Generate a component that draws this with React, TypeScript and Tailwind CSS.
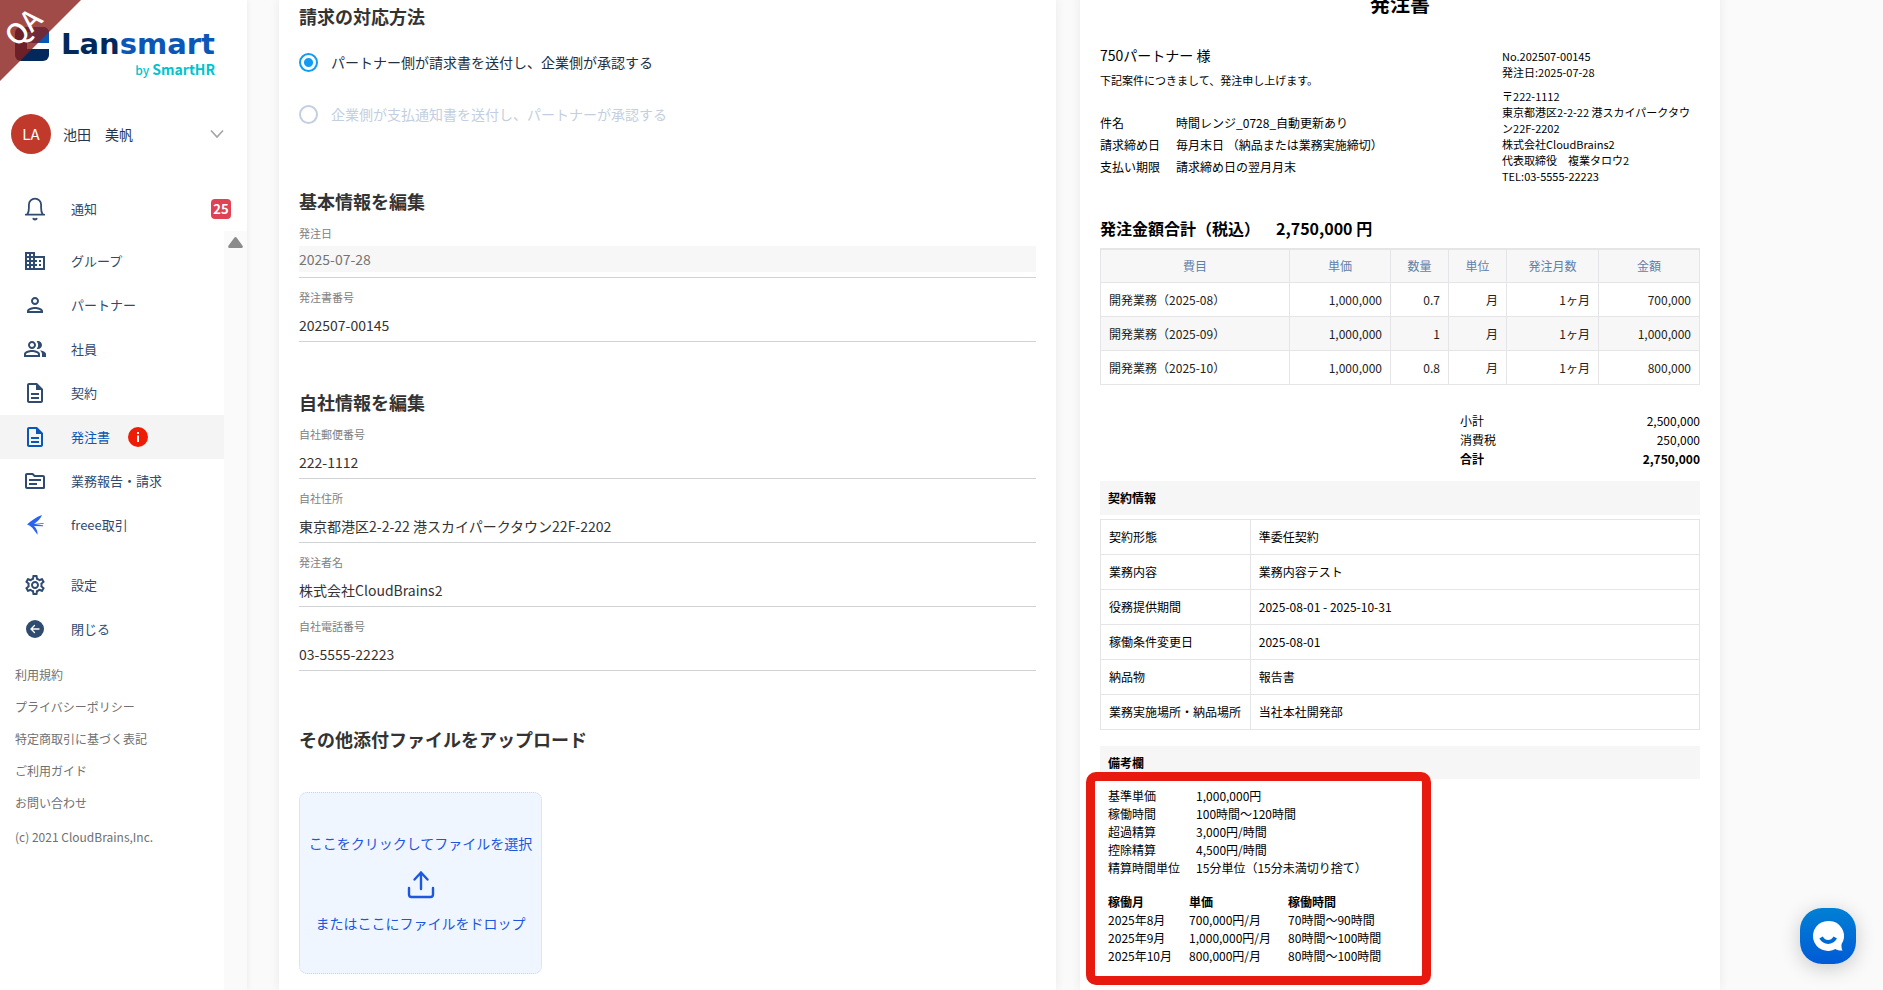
import React, { useState } from 'react';
import {
  MdDomain, MdOutlineDescription, MdOutlinePeopleAlt, MdOutlinePerson,
  MdOutlineSettings, MdOutlineTopic,
} from 'react-icons/md';

// --- Data ---
const FOOTER_LINKS = ['利用規約', 'プライバシーポリシー', '特定商取引に基づく表記', 'ご利用ガイド', 'お問い合わせ'];

const COMPANY_FIELDS = [
  { id: 'zip', label: '自社郵便番号', value: '222-1112' },
  { id: 'address', label: '自社住所', value: '東京都港区2-2-22 港スカイパークタウン22F-2202' },
  { id: 'orderer', label: '発注者名', value: '株式会社CloudBrains2' },
  { id: 'tel', label: '自社電話番号', value: '03-5555-22223' },
];

const ITEMS = [
  ['開発業務（2025-08）', '1,000,000', '0.7', '月', '1ヶ月', '700,000'],
  ['開発業務（2025-09）', '1,000,000', '1', '月', '1ヶ月', '1,000,000'],
  ['開発業務（2025-10）', '1,000,000', '0.8', '月', '1ヶ月', '800,000'],
];

const CONTRACT = [
  ['契約形態', '準委任契約'],
  ['業務内容', '業務内容テスト'],
  ['役務提供期間', '2025-08-01 - 2025-10-31'],
  ['稼働条件変更日', '2025-08-01'],
  ['納品物', '報告書'],
  ['業務実施場所・納品場所', '当社本社開発部'],
];

const RATES = [
  ['基準単価', '1,000,000円'],
  ['稼働時間', '100時間〜120時間'],
  ['超過精算', '3,000円/時間'],
  ['控除精算', '4,500円/時間'],
  ['精算時間単位', '15分単位（15分未満切り捨て）'],
];

const MONTHS = [
  ['2025年8月', '700,000円/月', '70時間〜90時間'],
  ['2025年9月', '1,000,000円/月', '80時間〜100時間'],
  ['2025年10月', '800,000円/月', '80時間〜100時間'],
];

// --- Icons ---
const BellIcon = () => (
  <svg viewBox="0 0 24 24" className="h-6 w-6" fill="none" stroke="currentColor" strokeWidth="1.8" strokeLinecap="round" strokeLinejoin="round">
    <path d="M2.800 17.700h18.400M4.400 17.300c1.200-1.700 1.500-3.300 1.500-6.300V7.800a6.100 6.100 0 0 1 12.200 0V11c0 3 .3 4.600 1.500 6.300" />
    <path d="M10.500 21.700c.8.800 2.200.800 3 0" strokeWidth="2" />
  </svg>
);

const SwallowIcon = () => (
  <svg viewBox="0 0 24 24" className="h-6 w-6" fill="#2864f0">
    <path d="M19 2C13 4 8 8 4 11.500c4 1 6.500 4.500 10.500 10.300.4-3-.8-6.300-3.500-8.800l9 .300v-1l-7.500-.500 8.200-1-.1-.700-9.600.900C14.500 8.500 17.500 6 19 2z" />
  </svg>
);

const BackIcon = () => (
  <svg viewBox="0 0 24 24" className="h-6 w-6">
    <circle cx="12" cy="12" r="9" fill="currentColor" />
    <path d="M16 12H8.500M11.500 8.500L8 12l3.500 3.500" fill="none" stroke="#fff" strokeWidth="1.300" strokeLinecap="round" strokeLinejoin="round" />
  </svg>
);

const UploadIcon = () => (
  <svg viewBox="0 0 32 32" className="h-8 w-8" fill="none" stroke="currentColor" strokeWidth="2.400" strokeLinecap="round" strokeLinejoin="round">
    <path d="M16 22V5.500M9.500 12.500l6.500-7 6.500 7M4 21v6.500A2.500 2.500 0 0 0 6.500 30h19a2.500 2.500 0 0 0 2.500-2.500V21" />
  </svg>
);

const ChatIcon = () => (
  <svg viewBox="0 0 32 32" className="h-8 w-8">
    <path d="M16 1a15 15 0 1 0 7.500 28c2 1.300 4.500 1.700 7 1.500-.9-1.800-1.300-4-.9-6.500A15 15 0 0 0 16 1z" fill="#fff" />
    <path d="M9 17.500c3.800 6 10.500 6 14.300 0" fill="none" stroke="#006ad4" strokeWidth="4" />
  </svg>
);

const NAV = [
  { label: 'グループ', icon: <MdDomain size={24} /> },
  { label: 'パートナー', icon: <MdOutlinePerson size={24} /> },
  { label: '社員', icon: <MdOutlinePeopleAlt size={24} /> },
  { label: '契約', icon: <MdOutlineDescription size={24} /> },
  { label: '発注書', icon: <MdOutlineDescription size={24} />, active: true },
  { label: '業務報告・請求', icon: <MdOutlineTopic size={24} /> },
  { label: 'freee取引', icon: <SwallowIcon /> },
];

function NavItem({ label, icon, active, children }: { label: string; icon: React.ReactNode; active?: boolean; children?: React.ReactNode }) {
  return (
    <a
      href="#"
      aria-current={active ? 'page' : undefined}
      className={`flex h-11 items-center pl-[23px] text-[13px] ${active ? 'bg-[#f4f4f4] text-[#0b57b7]' : 'text-[#2f4b70]'}`}
    >
      {icon}
      <span className="ml-6">{label}</span>
      {children}
    </a>
  );
}

function Logo() {
  return (
    <div className="flex h-[88px] pt-[27px] pl-[15px]">
      <svg viewBox="0 0 34 34" className="h-[34px] w-[34px] shrink-0">
        <rect width="34" height="34" rx="6" fill="#03295c" />
        <path d="M17 0h11a6 6 0 0 1 6 6v10H17z" fill="#0b57b7" />
        <path d="M12 5h5v11h-5z" fill="#5a7fb8" />
        <path d="M12 16h22v6H12z" fill="#fff" />
      </svg>
      <div className="ml-3 w-[154px]">
        <p className="font-['DejaVu_Sans',sans-serif] text-[29px] leading-[34px] font-bold text-[#03295c]">
          Lan<span className="text-[#0b57b7]">smart</span>
        </p>
        <p className="text-right text-sm leading-4 font-bold text-[#00c4cc]">
          <span className="text-xs font-medium">by</span> SmartHR
        </p>
      </div>
    </div>
  );
}

function Sidebar() {
  return (
    <aside className="relative z-10 flex w-[247px] shrink-0 flex-col bg-white shadow-[0_0_6px_rgba(0,0,0,0.08)]">
      <Logo />
      {/* environment ribbon */}
      <div className="absolute top-0 left-0">
        <div className="h-[81px] w-[81px] bg-[#881e1a]/80 [clip-path:polygon(0_0,100%_0,0_100%)]" />
        <span className="absolute top-2 left-0 w-11 -rotate-45 text-center text-[28px] leading-9 font-medium text-white">QA</span>
      </div>

      <button className="mt-[22px] flex h-12 items-center pl-[11px] text-left">
        <span className="flex h-10 w-10 items-center justify-center rounded-full bg-[#c0392b] text-[15px] text-white">LA</span>
        <span className="ml-3 flex-1 text-sm text-[#24364f]">池田　美帆</span>
        <svg viewBox="0 0 16 16" className="mr-[22px] h-4 w-4" fill="none" stroke="#a3a3a8" strokeWidth="1.600">
          <path d="M2 4.500l6 6.500 6-6.500" />
        </svg>
      </button>

      <div className="mt-[29px] flex h-11 items-center pl-[23px] text-[#2f4b70]">
        <BellIcon />
        <a href="#" className="ml-6 flex-1 text-[13px]">通知</a>
        <span className="mr-4 flex h-5 w-5 items-center justify-center rounded bg-[#e04255] text-[13px] font-bold text-white">25</span>
      </div>

      <div className="flex flex-1">
        <div className="flex-1 pt-2">
          <nav>
            {NAV.map((n) => (
              <NavItem key={n.label} label={n.label} icon={n.icon} active={n.active}>
                {n.active && (
                  <svg viewBox="0 0 20 20" className="ml-[18px] h-5 w-5">
                    <circle cx="10" cy="10" r="10" fill="#ee1c05" />
                    <path d="M9 5h2v2H9zM9 8.500h2V15H9z" fill="#fff" />
                  </svg>
                )}
              </NavItem>
            ))}
            <div className="mt-4">
              <NavItem label="設定" icon={<MdOutlineSettings size={24} />} />
              <NavItem label="閉じる" icon={<BackIcon />} />
            </div>
          </nav>
          <ul className="mt-2 pl-[15px] text-xs text-[#707070]">
            {FOOTER_LINKS.map((l) => (
              <li key={l} className="flex h-8 items-center"><a href="#">{l}</a></li>
            ))}
            <li className="mt-0.5 flex h-8 items-center">(c) 2021 CloudBrains,Inc.</li>
          </ul>
        </div>
        <div className="flex w-[23px] justify-center bg-[#fafafa] pt-1.5">
          <svg viewBox="0 0 15 11" className="h-[11px] w-[15px]">
            <path d="M6.300.8a1.500 1.500 0 0 1 2.400 0l5.700 7.700c.8 1.200.3 2.500-1.200 2.500H1.800C.3 11-.2 9.700.6 8.500z" fill="#8b8b8b" />
          </svg>
        </div>
      </div>
    </aside>
  );
}

function Field({ id, label, value, disabled }: { id: string; label: string; value: string; disabled?: boolean }) {
  return (
    <div className="h-16 border-b border-[#cfd3d8] pt-[9px]">
      <label htmlFor={id} className="mb-[3px] block text-[11px] leading-5 text-[#808080]">{label}</label>
      <input
        id={id}
        type="text"
        defaultValue={value}
        disabled={disabled}
        className={`block w-full text-sm outline-none ${disabled ? 'h-[26px] bg-[#f7f7f7] text-[#757575]' : 'h-[30px] text-[#333]'}`}
      />
    </div>
  );
}

function OrderForm() {
  const [method, setMethod] = useState('invoice');
  const heading = 'mb-px text-lg leading-6 font-bold text-[#333]';
  return (
    <form className="bg-white px-5 pt-1 shadow-[0_0_10px_rgba(0,0,0,0.07)]">
      <h2 className={heading}>請求の対応方法</h2>
      <div className="mt-[22px] flex flex-col gap-7">
        <label className="flex h-6 items-center gap-[13px] text-sm text-[#23303f]">
          <input
            type="radio"
            name="method"
            checked={method === 'invoice'}
            onChange={() => setMethod('invoice')}
            className="h-[19px] w-[19px] appearance-none rounded-full border-2 border-[#119bf5] checked:bg-[radial-gradient(circle,#119bf5_4px,#fff_5px)]"
          />
          パートナー側が請求書を送付し、企業側が承認する
        </label>
        <label className="flex h-6 items-center gap-[13px] text-sm text-[#c3cfe0]">
          <input type="radio" name="method" disabled className="h-[19px] w-[19px] appearance-none rounded-full border-2 border-[#c3cfe0]" />
          企業側が支払通知書を送付し、パートナーが承認する
        </label>
      </div>

      <h2 className={`mt-[63px] ${heading}`}>基本情報を編集</h2>
      <Field id="order-date" label="発注日" value="2025-07-28" disabled />
      <Field id="order-no" label="発注書番号" value="202507-00145" />

      <h2 className={`mt-12 ${heading}`}>自社情報を編集</h2>
      {COMPANY_FIELDS.map((f) => <Field key={f.id} {...f} />)}

      <h2 className={`mt-14 ${heading}`}>その他添付ファイルをアップロード</h2>
      <label className="mt-[41px] flex h-[182px] w-[243px] cursor-pointer flex-col items-center justify-center gap-3.5 rounded-lg border border-dotted border-[#cbd5e1] bg-[#eff6ff] text-sm text-[#1d56e0]">
        <span>ここをクリックしてファイルを選択</span>
        <UploadIcon />
        <span>またはここにファイルをドロップ</span>
        <input type="file" className="sr-only" />
      </label>
    </form>
  );
}

function OrderPreview() {
  const cell = 'border border-[#e5e5e8] px-2 py-2';
  return (
    <article className="-mt-2 bg-white px-5 text-xs text-black shadow-[0_0_10px_rgba(0,0,0,0.07)]">
      <h1 className="text-center text-xl leading-6 font-bold">発注書</h1>

      <div className="mt-[29px] flex justify-between">
        <div>
          <p className="text-sm leading-5">750パートナー 様</p>
          <p className="mt-[7px] text-[11px] leading-4">下記案件につきまして、発注申し上げます。</p>
          <dl className="mt-6 grid grid-cols-[76px_auto] leading-[22px]">
            <dt>件名</dt><dd>時間レンジ_0728_自動更新あり</dd>
            <dt>請求締め日</dt><dd>毎月末日 （納品または業務実施締切）</dd>
            <dt>支払い期限</dt><dd>請求締め日の翌月月末</dd>
          </dl>
        </div>
        <div className="w-[33%] pt-[3px] text-[11px] leading-4">
          <p>No.202507-00145</p>
          <p>発注日:2025-07-28</p>
          <p className="mt-2">〒222-1112</p>
          <p>東京都港区2-2-22 港スカイパークタウン22F-2202</p>
          <p>株式会社CloudBrains2</p>
          <p>代表取締役　複業タロウ2</p>
          <p>TEL:03-5555-22223</p>
        </div>
      </div>

      <p className="mt-8 flex gap-4 text-base leading-6 font-bold">
        <span>発注金額合計（税込）</span>
        <span>2,750,000 円</span>
      </p>

      <table className="mt-2 w-full table-fixed border-collapse leading-[17px]">
        <colgroup>
          <col />
          <col className="w-[101px]" />
          <col className="w-[58px]" />
          <col className="w-[58px]" />
          <col className="w-[92px]" />
          <col className="w-[101px]" />
        </colgroup>
        <thead>
          <tr className="bg-[#f7f7f7] leading-4 text-[#5f7fab]">
            {['費目', '単価', '数量', '単位', '発注月数', '金額'].map((h) => (
              <th key={h} className={`${cell} border-t-2 font-normal`}>{h}</th>
            ))}
          </tr>
        </thead>
        <tbody>
          {ITEMS.map((row) => (
            <tr key={row[0]} className="text-right text-[#222] even:bg-[#f7f7f7]">
              {row.map((v, i) => <td key={i} className={`${cell} ${i === 0 ? 'text-left' : ''}`}>{v}</td>)}
            </tr>
          ))}
        </tbody>
      </table>

      <dl className="mt-[26px] ml-auto grid w-[40%] grid-cols-2 leading-[19px]">
        <dt>小計</dt><dd className="text-right">2,500,000</dd>
        <dt>消費税</dt><dd className="text-right">250,000</dd>
        <dt className="font-bold">合計</dt><dd className="text-right font-bold">2,750,000</dd>
      </dl>

      <h3 className="mt-[13px] bg-[#f6f6f6] px-2 leading-[34px] font-bold">契約情報</h3>
      <table className="mt-1 w-full border-collapse leading-[18px]">
        <tbody>
          {CONTRACT.map(([k, v]) => (
            <tr key={k}>
              <th className={`${cell} w-[25%] text-left font-normal whitespace-nowrap`}>{k}</th>
              <td className={cell}>{v}</td>
            </tr>
          ))}
        </tbody>
      </table>

      <h3 className="mt-4 bg-[#f6f6f6] px-2 leading-[33px] font-bold">備考欄</h3>
      <div className="relative px-2 pt-2 leading-[18px]">
        <dl className="grid grid-cols-[88px_auto]">
          {RATES.map(([k, v]) => <React.Fragment key={k}><dt>{k}</dt><dd>{v}</dd></React.Fragment>)}
        </dl>
        <table className="mt-4">
          <thead>
            <tr className="text-left">
              <th className="w-[81px]">稼働月</th><th className="w-[99px]">単価</th><th>稼働時間</th>
            </tr>
          </thead>
          <tbody>
            {MONTHS.map((row) => <tr key={row[0]}>{row.map((v) => <td key={v}>{v}</td>)}</tr>)}
          </tbody>
        </table>
        <div className="pointer-events-none absolute -top-[7px] -left-3.5 h-[213px] w-[345px] rounded-[10px] border-[9px] border-[#e8190f]" />
      </div>
    </article>
  );
}

export default function App() {
  return (
    <div className="flex h-screen overflow-hidden bg-[#fafafa] font-['Noto_Sans_CJK_JP',sans-serif]">
      <Sidebar />
      <main className="grid flex-1 grid-cols-[17fr_14fr] gap-6 pr-[163px] pl-8">
        <OrderForm />
        <OrderPreview />
      </main>
      <button aria-label="チャット" className="fixed right-[27px] bottom-[26px] flex h-14 w-14 items-center justify-center rounded-[22px] bg-linear-to-b from-[#0080d4] to-[#005ad6] shadow-[0_4px_20px_rgba(0,0,0,0.2)]">
        <ChatIcon />
      </button>
    </div>
  );
}
